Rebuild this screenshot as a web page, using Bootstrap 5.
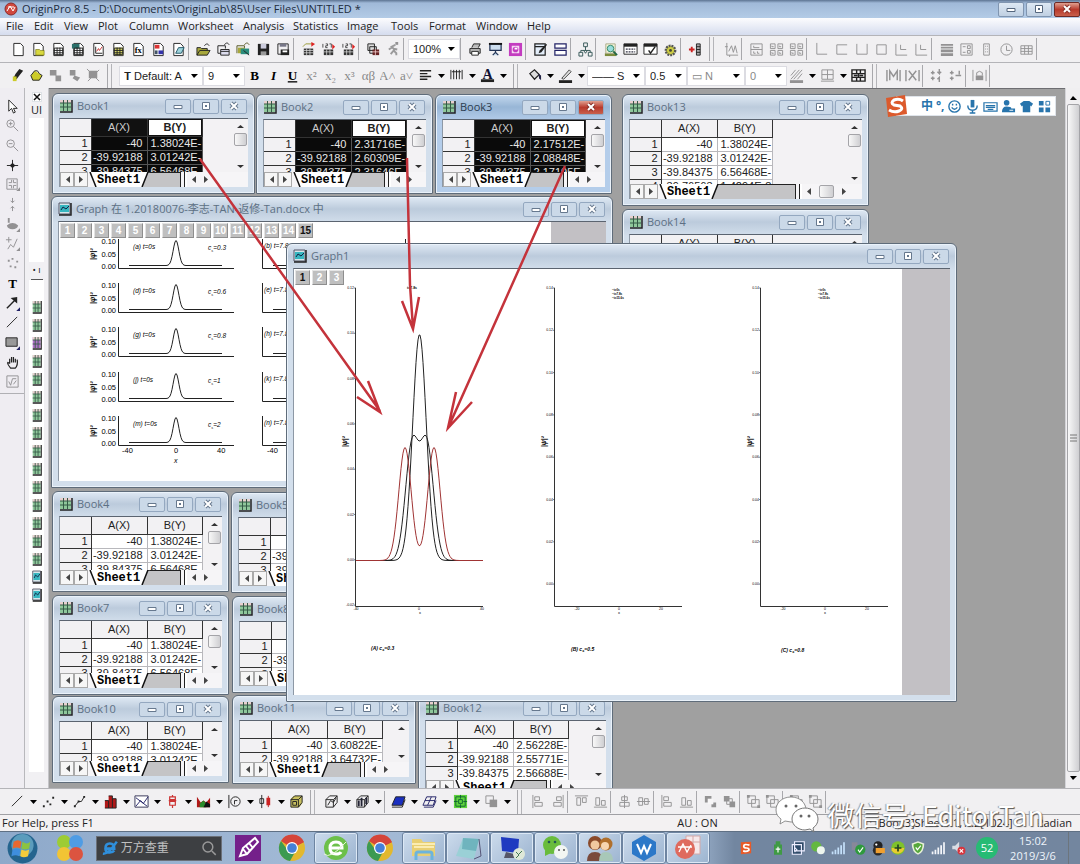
<!DOCTYPE html>
<html lang="en">
<head>
<meta charset="utf-8">
<meta name="viewport" content="width=device-width, initial-scale=1">
<title>OriginPro 8.5</title>
<link href="https://cdn.jsdelivr.net/npm/bootstrap@5.3.0/dist/css/bootstrap.min.css" rel="stylesheet">
<style>
:root{--ui:"Open Sans","Noto Sans CJK SC",sans-serif;--num:"Liberation Sans",sans-serif;}
body{font-family:var(--ui);font-size:11px;line-height:16px;color:#222;background:#efedf0;overflow:hidden}
button{font:inherit;color:inherit}
svg{display:block}
.titlebar{height:18px;background:linear-gradient(#5d7492 0,#a0b9d8 3px,#b3cbe6);color:#1d2b3c}
.menubar{height:17px;background:linear-gradient(#fcfcfe,#d5dcee);padding-left:2px}
.menubar a{color:#222;text-decoration:none;line-height:16px}
.caps{gap:2px}
.capbtn{width:26px;height:15px;border:1px solid #8095b0;border-radius:2px;background:linear-gradient(#dde8f4,#c0d0e2);padding:0;display:flex;align-items:center;justify-content:center;color:#55677e}
.capbtn.closer{background:linear-gradient(#e0a090,#b83a2c 50%,#c8604c);border-color:#6e2a26;color:#fff}
.toolrow{height:27px;border-top:1px solid #b4b4b8;background:#f1f0f2;padding-left:8px}
.toolrow.thin{height:26px}
.tl{width:20px;height:22px;padding:0;border:0;background:transparent;display:flex;align-items:center;justify-content:center;flex:none}
.thin .tl{width:19px}
.tcar{width:12px;height:22px;padding:0;border:0;background:transparent;display:flex;align-items:center;justify-content:center;flex:none}
.tsep{width:5px;height:22px;border-left:1px solid #a8a8ac;flex:none}
.tgrip{width:16px;height:24px;flex:none;background:linear-gradient(90deg,transparent 4px,#a8a8ac 4px,#a8a8ac 5px,transparent 5px,transparent 8px,#b4b4b8 8px,#b4b4b8 9px,transparent 9px)}
.off{opacity:.45}
.combo{appearance:none;border:1px solid #dcdce2;background:#fff url("data:image/svg+xml,%3Csvg xmlns='http://www.w3.org/2000/svg' width='7' height='4'%3E%3Cpath d='M0 0h7L3 4z'/%3E%3C/svg%3E") no-repeat right 4px center;height:20px;font:11px/16px var(--num);padding:0 12px 0 4px;color:#222;flex:none;border-radius:0}
.combo.dim{color:#888}
.side{width:25px;border-right:1px solid #b8b8bc;background:#efedf2}
.side .palette{height:306px;padding:9px 0 2px;border-bottom:1px solid #b0b0b4}
.side .tl{width:24px;height:18px}
.explorer{width:24px;background:#f1f0f3;border-right:1px solid #c4c4c8}
.explorer .xbtn{width:10px;height:10px}
.explorer .tree{width:15px;background:#fff}
.explorer .tree.upper{height:144px}
.explorer .split{height:18px;border-bottom:1px solid #555;width:12px;font-size:9px}
#books{padding-top:20px}
#books span{height:18px;flex:0 1 18px}
.desk{background:#a0a0a0;overflow:hidden;border-top:1px solid #6e6e72}
.vbar{width:15px;background:#f0eff1;border-left:1px solid #d4d4d8}
.thumb{border:1px solid #a4a4a8;border-radius:2px;background:linear-gradient(90deg,#f8f8f8,#cfcfd2)}
.frm{position:absolute;border:1px solid #5f6c7a;border-radius:6px 6px 1px 1px;background:linear-gradient(#dfe9f4 0,#bccbdc 12px,#d3dfec 26px);padding:0 6px 6px;box-shadow:inset 0 0 0 1px #eaf2fa}
.frm.act{background:linear-gradient(#c3d8ee 0,#98b6d6 12px,#b4cdea 26px)}
.frmhead{height:24px;color:#5d7084;flex:none;padding-right:1px}
.act .frmhead{color:#2c3d50}
.frmhead .capbtn{border-color:#94a8c0;color:#66788e;background:#cbd9e8}
.frmhead .capbtn.closer{background:linear-gradient(#e0a090,#b83a2c 50%,#c8604c);color:#fff}
.frmbody{background:#f3f2f4;border-top:1px solid #5b6470;border-left:1px solid #8d98a5}
.frmbody.canvas{background:#c2c0c4}
.sheet{width:143px;table-layout:fixed;border-collapse:collapse;font:11px/13px var(--num);margin:0}
.sheet th,.sheet td{font-weight:400;padding:0 4px 0 0;text-align:right;height:14px;overflow:hidden;white-space:nowrap;border-right:1px solid #b8b8bc;border-bottom:1px solid #b8b8bc;background:#fff}
.sheet td:last-child{padding:0 0 0 3px;text-align:left}
.sheet thead th{height:17px;text-align:center;padding:0;background:#f2f1f3}
.sheet th{background:#f2f1f3;border-color:#333;padding-right:3px}
.sheet .c0{width:31px}.sheet .c1{width:56px}
.picked td{background:#0a0a0a;color:#e8e8e8;border-color:#555}
.picked thead th:nth-child(2){background:#111;color:#ccc}
.picked thead th:nth-child(3){box-shadow:inset 0 0 0 1px #111;background:#fff;font-weight:700}
.tabs1{height:15px;font:bold 12px/14px "Liberation Mono",monospace;color:#000;flex:none;background:#f6f5f7}
.navb{width:14px;height:15px;border:1px solid #aaa;background:#f6f6f6;padding:0;display:flex;align-items:center;justify-content:center;flex:none}
.sheetname{background:#fff;border:0;padding:0;font:inherit;flex:none}
.blank{background:#c4c4c6;border-top:1px solid #222;border-right:1px solid #222;height:15px;flex:none;width:31px}
.blank.long{width:76px}
.bars2{width:3px;border-left:1px solid #222;margin-left:3px;background:#fff}
.sv{width:16px}.sv .thumb{width:13px;height:13px}
.hthumb{width:15px;height:13px}
.layers{position:absolute;left:1px;top:1px;gap:2px}
.lay{width:15px;height:15px;padding:0;border:1px solid;border-color:#e4e4e4 #8e8e8e #8e8e8e #e4e4e4;background:#bfbfbf;color:#fff;font:bold 10px/12px var(--num)}
.lay.on{color:#111}
.over{position:absolute;left:0;top:0;pointer-events:none;z-index:40}
.ime{position:absolute;right:9px;top:7px;height:20px;background:#fff;border:1px solid #dfe4ea;padding-left:20px;padding-right:3px;color:#2774ac;width:160px}
.ime svg.logo{position:absolute;left:-14px;top:-4px}
.ime span{font-size:12px;font-weight:700}
.statusbar{height:17px;border-top:1px solid #a0a0a4;background:#f3f1f2;padding:0 8px 0 2px}
.stat-au{width:192px}.stat-cell{white-space:nowrap}
.taskbar{height:33px;background:linear-gradient(90deg,#8ea9ca,#a3bad6 30%,#9fb5d0 64%,#7286a0 68%,#73869f);border-top:1px solid #5f7084;color:#eef4fb}
.tk{width:44px;height:32px;padding:0;border:0;background:transparent;display:flex;align-items:center;justify-content:center;flex:none}
.tk.run{border:1px solid #6d84a1;box-shadow:inset 0 0 0 1px #dce8f5;background:linear-gradient(135deg,#ccdbec,#9cb4d0);border-radius:3px}
.find{width:126px;height:25px;background:#3d3f42;border:1px solid #6b7078}
.find input{width:84px;min-width:0;background:transparent;border:0;color:#c8c8c8;font:12px/16px var(--ui);padding:0 0 0 2px}
.find input::placeholder{color:#c0c0c0}
.ty{width:20px;height:30px;padding:0;border:0;background:transparent;display:flex;align-items:center;justify-content:center;flex:none}
.ty:first-child{margin-right:12px}
.n52{width:22px;height:22px;border-radius:50%;background:#27bb74;color:#fff;line-height:22px}
.clk{width:54px;line-height:15px}
.peek{width:12px;height:32px}
.water{position:absolute;right:36px;bottom:30px;z-index:60;color:#fff;font:27px/36px "Noto Sans CJK SC",sans-serif;text-shadow:1px 1px 1px #555,-1px 0 1px #999;pointer-events:none;gap:8px;white-space:nowrap}
</style>
</head>
<body class="d-flex flex-column vh-100 position-relative">
<header class="titlebar d-flex align-items-center ps-1 flex-shrink-0">
  <svg width="14" height="14" viewBox="0 0 14 14" class="me-1"><circle cx="7" cy="7" r="6" fill="#d0483e" stroke="#8d2b2b"/><path d="M3 9l3-5 3 5 2-4M4 5h6" fill="none" stroke="#fff"/></svg>
  <span class="flex-grow-1 text-nowrap">OriginPro 8.5 - D:\Documents\OriginLab\85\User Files\UNTITLED *</span>
  <div class="d-flex caps" data-caps="main"></div>
</header>
<nav class="menubar d-flex flex-shrink-0" aria-label="Menu"></nav>
<div class="toolrow d-flex align-items-center flex-shrink-0" data-tools="new folder sheet xls graph matrix fx layout note | open openS openG save saves | impw imp1 impn | dup run- | $zoom | print slide puzzle | edit split | tree | find table check gear | addcol # gfx- | lay1- lay4- lay4- | axL- axC- axU- axB- axI- axI- | lines- leg- col- clock- grid- |"></div>
<div class="toolrow thin d-flex align-items-center flex-shrink-0" data-tools="brush paint c1- c2- c3- # $font $size tB tI tU tsup- tsub- tss- tab- tA- ta- left , bars , fontc , # bucket , pen , $line $lw $fill $fs hatch- , bord- , merge # mm- mx- | al1- al2- | lock- |"></div>

<main class="d-flex flex-grow-1 overflow-hidden">
  <aside class="side flex-shrink-0"><div class="palette d-flex flex-column justify-content-between" data-tools="arrow zin- zout- cross sel- dr1- dr2- dr3- dots- T arr line rect hand sqrt-"></div></aside>
  <aside class="explorer flex-shrink-0 d-flex flex-column align-items-center">
    <button class="xbtn border bg-white p-0 mt-1" aria-label="Close explorer"><svg width="8" height="8" viewBox="0 0 8 8"><path d="M1 1l6 6M7 1L1 7" stroke="#111" stroke-width="1.500"/></svg></button>
    <span>UI</span>
    <div class="tree upper flex-shrink-0"></div>
    <div class="split flex-shrink-0 text-center">• ı</div>
    <div id="books" class="tree d-flex flex-column align-items-center flex-grow-1 mb-3"></div>
  </aside>
  <section class="desk position-relative flex-grow-1" id="desk"></section>
  <div class="vbar flex-shrink-0 d-flex flex-column align-items-center py-2">
    <svg width="7" height="4"><path d="M0 4h7L3 0z"/></svg>
    <div class="thumb flex-grow-1 my-1 d-flex align-items-center"><svg width="11" height="8" viewBox="0 0 11 8"><path d="M2 1h7M2 4h7M2 7h7" stroke="#777"/></svg></div>
    <svg width="7" height="4"><path d="M0 0h7L3 4z"/></svg>
  </div>
</main>

<div class="toolrow thin d-flex align-items-center flex-shrink-0" data-tools="line , scat , ls , hist , fit , box , area , polar , candle , td # cube , cubeb , | surf , wire , cont , img- , # l1- l2- | l3- l4- | l5- l6- | l1- l4- | g1- g2- | g3- g3- | g3- g3- |"></div>
<footer class="statusbar d-flex flex-shrink-0 align-items-center">
  <span class="flex-grow-1">For Help, press F1</span>
  <span class="stat-au">AU : ON</span>
  <span class="stat-cell">: [Book3]Sheet1!1,1..2[1024]</span>
  <span class="ms-4">Radian</span>
</footer>
<footer class="taskbar d-flex align-items-center flex-shrink-0" id="task"></footer>
<div class="water d-flex align-items-center">
  <svg width="44" height="38" viewBox="0 0 44 38"><path d="M16 1C7 1 1 7 1 14c0 4 2 7 5 9l-1 5 5-3 6 1c8 0 15-5 15-12S25 1 16 1z" fill="#fff" stroke="#777" stroke-width=".8"/><path d="M30 12c-7 0-13 5-13 11s6 11 13 11l5-1 4 3-1-4c3-2 5-5 5-9 0-6-6-11-13-11z" fill="#fff" stroke="#777"/><g fill="#666"><circle cx="11" cy="10" r="1.500"/><circle cx="21" cy="10" r="1.500"/><circle cx="26" cy="20" r="1.500"/><circle cx="34" cy="20" r="1.500"/></g></svg>
  <span>微信号: EditorTan</span>
</div>
<script>
const page='<path d="M3 1.500h7l3 3v10H3z" fill="#fff" stroke="#222"/>';
const S=(d,c='#222',w=1,f='none')=>`<path d="${d}" fill="${f}" stroke="${c}" stroke-width="${w}"/>`;
const F=(d,c='#222')=>`<path d="${d}" fill="${c}"/>`;
const X=(t,a='')=>`<text x="8" y="13" text-anchor="middle" font-family="Liberation Serif" font-size="14" ${a}>${t}</text>`;
const gridp=S('M3.500 6.500h9v7h-9zM3 9h10M3 11.500h10M6.500 6v8M9.500 6v8');
const opn=F('M1 14V6h4l1 1h6v2h3l-3 5z','#a8a83c')+S('M1 14V6h4l1 1h6v2M1 14l3-5h11l-3 5zM9 4c2-3 4-2 5 0');
const flop=F('M2 2h12v12H2z')+F('M5 2h6v5H5z','#ccd')+F('M5 10h6v4H5z','#999');
const cubep=S('M2 6l4-4h8v7l-4 5H2zM2 6h8l4-4M10 6v8');
const hx=S('M2 3h12v10H2z','#777');
const I={
new:page,folder:page+F('M5 8h4l1 1h4v5H5z','#d8d840')+S('M5 8h4l1 1h4v5H5z','#660',.6),sheet:page+gridp,
xls:page+F('M1 2h8v5H1z','#2a6f6a')+gridp,graph:page+S('M5 5v7h7')+S('M6 10l2-3 1 2 3-4','#c33'),
matrix:page+F('M4 6h9v8H4z','#dada66')+gridp,fx:page+`<text x="4" y="12" font-size="9" font-weight="700" font-family="Liberation Serif">fx</text>`,
layout:page+F('M4 3h5v4H4z','#d33')+F('M8 9h5v4H8z','#33a')+F('M4 9h3v4H4z','#456'),note:page+S('M5 12l3-6h6l-3 6z','#256',1,'#9fd4dc'),
open:opn,openS:S('M2 4h8v3M2 4v8h3M9 3c2-3 4-2 5 0')+S('M5 8h9v6H5zM5 10h9','#222',1,'#dde'),openG:S('M1 12V4h8v3M9 3c2-3 4-2 5 0','#552')+F('M2 6h7v6H2z','#a8a83c')+F('M5 7h9v6H5z','#2a8c7c')+S('M8 9l6 5'),
save:flop,saves:S('M2 2h11v11H2z')+F('M5 8h9v6H5z')+F('M7 9h5v2H7z','#fff')+F('M4 2h7v3H4z','#778'),
impw:F('M3 7h10v7H3z','#333')+S('M3 9h10M3 11.500h10M6 7v7M9.500 7v7','#ddd',.8)+S('M2 5l3-3h7','#993')+F('M11 0l4 2-4 3z','#d22'),
imp1:F('M3 8h10v6H3z','#333')+S('M3 10.500h10M6 8v6M9.500 8v6','#ddd',.8)+S('M2 2v4M5 2h2v2H5v2h2M9 2h2v4','#222',.8)+F('M12 2l3 3-3 3z','#d22'),
dup:S('M2 2h7v7H2zM4 5h7v7H4z','#222',1,'#ddd')+F('M7 8h7v6H7z','#622')+S('M7 10.500h7M10 8v6','#fdd',.8),
run:S('M10 3l-4 2 3 3-4 5M6 6L3 8M8 7l4 1M8 9l3 3v2','#333',2)+F('M10 0h3v3h-3z'),
print:S('M4 6l2-4h7l-2 4M2 7h11v5H2z','#222',1,'#bbb')+S('M4 10h7v4H4z','#222',1,'#fff'),
slide:S('M2 2h12v7H2zM8 9v3M5 14l3-3 3 3','#235',1.3,'#cde')+S('M1 2h14','#111',2),
puzzle:F('M1 1h14v14H1z','#c33cc0')+F('M4 4h8v8H4z','#f6d8f4')+C0(8,8,3,'#c33cc0')+F('M7 6h3v2H7z','#fff'),
edit:S('M2 2h11v12H2zM2 5h11','#222',1.3,'#e4eefa')+F('M14 2L7 9l-1 3 3-1 6-8z'),split:S('M2 2h12v4.500H2zM2 9h12v5H2z','#226',1.3,'#fff'),
tree:S('M6 1h4v4H6zM1 11h4v4H1zM11 11h4v4h-4zM8 5v4M3 11V9h10v2M6 9l2 3 2-3','#355'),
find:F('M2 12h12v3H2z','#7b8b3c')+S('M3 2h10v10H3z','#aa8',1,'#f4f4d8')+'<circle cx="8" cy="7" r="3.500" fill="#9dd" stroke="#386"/>'+S('M11 10l4 4','#264',2),
table:S('M1 2h14v11H1z','#222',1,'#fff')+F('M1 2h14v3H1z')+S('M3 7.500h10M3 10.500h10','#334',1.3).replace('/>',' stroke-dasharray="2 1"/>'),check:S('M1 2h14v11H1z','#222',1,'#fff')+F('M1 2h14v3H1z')+S('M6 9l2 3 5-7','#222',1.5),
gear:'<circle cx="8" cy="9" r="5" fill="#cccc44" stroke="#555" stroke-width="2.500" stroke-dasharray="2 1"/>'+C0(8,9,1.5,'#443'),
addcol:S('M1 8h6M4 5v6','#c22',2)+S('M9 2h4v12H9zM9 5h4M9 8h4M9 11h4','#222',1,'#aaa'),
gfx:S('M3 1v13h12M1 5h3M6 14v2M5 10l3-6 2 7 2-7 2 8'),lay1:S('M2 2h12v12H2zM2 8h12M5 4v2h6M5 10v2h2M9 10v2h2'),lay4:S('M1.500 2h5v5h-5zM9.500 2h5v5h-5zM1.500 9h5v5h-5zM9.500 9h5v5h-5zM3 4v1h2M11 4v1h2M3 11v1h2M11 11v1h2'),
axL:S('M3 1v12h11'),axC:S('M14 3H3v10h11'),axU:S('M3 2v11h11V2'),axB:S('M3 3h10v10H3z'),axI:S('M2 2v12h12M7 3v5h6'),
lines:F('M2 2h13v2H2zM2 5h13v2H2zM2 8h13v3H2zM2 12h13v3H2z'),leg:S('M2 2h12v12H2zM4 5h3M4 11h3M9 4h3v3H9zM9 9h3v3H9z'),col:S('M5 2h6v12H5zM7 4v1M7 7v1M7 10v1M9 4v1M9 7v1M9 10v1'),clock:S('M8 2a6 6 0 100 12A6 6 0 008 2zM8 4v5h4'),grid:S('M2 4h12v9H2zM2 7h12M2 10h12M6 4v9M10 4v9'),
brush:F('M10 1l4 2-4 5-3 4H3l3-6z')+F('M3 9h4v5H3z','#cccb29'),paint:F('M2 8l4-5 8 5-3 5H4z','#cccb29')+S('M2 8l4-5 3 0 2 3 3 2-3 5H4z'),
c1:F('M2 2h7v6H2zM8 8h6v6H8z'),c2:F('M3 2h6v6H3zM8 8l6 2-3 4-5-3z'),c3:F('M3 3h9v8H3zM1 1l2 2M10 9l5 5z')+S('M1 1l13 13M14 2L2 14'),
tB:X('B','font-weight="700"'),tI:X('I','font-weight="700" font-style="italic"'),tU:X('U','font-weight="700" text-decoration="underline"'),tsup:X('x²'),tsub:X('x₂'),tss:X('x³'),tab:X('αβ'),tA:X('A˄'),ta:X('a˅'),T:X('T','font-weight="700"'),
left:S('M2 3h12M2 6h8M2 9h12M2 12h8','#222',1.5),bars:S('M2 2v10M5 2v10M8 2v10M11 2v10M14 2v10')+S('M3 4h10'),fontc:F('M1 12h14v3H1z')+'<text x="8" y="12" text-anchor="middle" font-family="Liberation Serif" font-size="15" font-weight="700" fill="#113">A</text>',
bucket:S('M3 6l5-4 5 5-5 5z','#222',1.3,'#ddd')+F('M12 6l3 2v5l-2-2z','#224'),pen:F('M1 13h14v3H1z')+S('M4 11l8-9 2 2-8 8z','#444',1,'#ddd'),
hatch:S('M2 8l5-6M2 12l9-10M5 12l9-10M9 12l5-6')+F('M1 13h14v3H1z'),bord:S('M2 2h12v10H2zM8 2v10M2 7h12')+S('M1 14h14'),merge:S('M1 2h14v12H1zM1 6h14M1 10h14M6 2v4M10 2v4M6 10v4M10 10v4M3 8h4M9 8h4M8 6v4','#222',1.5),
mm:S('M1 2v12M15 2v12M4 13V3l4 6 4-6v10','#222',1.5),mx:S('M1 2v12M15 2v12M4 3l8 10M12 3L4 13','#222',1.5),al1:S('M4 3v4M2 5h4M4 9v4M2 11h4M11 1v5l-2-2M11 6l2-2M11 15v-5l-2 2','#222',1.5),al2:S('M4 3v4M2 5h4M4 9v4M2 11h4M8 8h6M12 3v4','#222',1.5),lock:S('M1 2v12M15 2v12M5 8V5q3-3 6 0v3')+F('M4 8h8v5H4z'),
arrow:S('M4 1v12l3-3 2 5 2-1-2-4h4z','#222',1,'#fff'),zin:S('M6 2a4 4 0 100 8 4 4 0 000-8zM4 6h4M6 4v4M9 9l5 5'),zout:S('M6 2a4 4 0 100 8 4 4 0 000-8zM4 6h4M9 9l5 5'),cross:S('M8 2v12M2 8h12')+F('M8 5l3 3-3 3-3-3z'),
sel:S('M2 2h11v11H2z')+S('M4 6h3V3M9 3v3h3M4 9h3v3M9 12V9h3')+F('M12 15l4-4v4z'),dr1:S('M8 1v5M6 4l2 2 2-2M8 15v-5M6 12l2-2 2 2'),dr2:F('M2 9q6-5 12 0-1 4-6 4t-6-4zM3 1h2v5H3zM12 16l4-4v4z'),dr3:S('M1 4h6M4 1v6M3 14l3-5 3 3 4-9')+F('M12 16l4-4v4z'),dots:S('M8 2v2M3 5h2M12 6h2M5 11h2M10 12h2','#222',2),
arr:S('M2 13L11 4','#222',1.5)+F('M13 1v7L6 2z')+F('M12 16l4-4v4z','#226'),line:S('M2 13L13 2'),lineT:'' ,rect:S('M1 3h12v9H1z','#222',1,'#999')+F('M12 16l4-4v4z','#226'),hand:S('M5 9V4M7 8V2M9 8V2M11 8V4M5 9L3 8q-1 1 3 6h5q3-3 2-9','#222',1.3),sqrt:S('M2 2h12v12H2zM4 8l2 4 2-7h4M9 11l3-4'),
scat:F('M2 12h2v2H2zM6 7h2v2H6zM9 10h2v2H9zM12 3h2v2h-2z'),ls:S('M3 13l4-5h3l3-5')+F('M2 12h2v2H2zM6 7h2v2H6zM12 2h2v2h-2z'),hist:F('M2 7h4v8H2zM6 2h4v13H6zM10 5h4v10h-4z','#b01818')+S('M2 7h4v8M6 2h4v13M10 5h4v10H2'),fit:S('M1 2h14v12H1z','#335',1,'#fff')+S('M2 13l5-6 3 3 5-7M2 4l12 9','#226'),box:S('M5 3h6v3H5zM5 8h6v4H5zM8 6v2M8 1v2M8 12v3M4 7h8','#c33',1.3),area:F('M1 14V3l4 6 3-2 3 2 4-5v10z','#b01818')+F('M4 14v-4l4-3 3 3v4z','#2a8a2a')+F('M8 14l3-6 4 3v3z','#111'),polar:S('M2 1v14M9 3a5 5 0 100 10A5 5 0 009 3zM8 11V7h3'),candle:S('M4 1v14M2 5h4v5H2z','#222',1,'#fff')+S('M11 2v12','#b22')+F('M9 4h4v8H9z','#c22'),td:F('M2 5l3-3h9v8l-3 4H2z','#c8c060')+cubep+S('M4 8h4v4H4z'),
cube:cubep+S('M4 12l3-5 3 2 3-5'),cubeb:cubep+S('M4 7v6M7 4v9M12 4v7','#223',2),surf:F('M1 12l4-9h10l-3 9z','#1a2fc0')+S('M1 12l4-9h10l-3 9zM1 14h11l3-8'),wire:S('M1 12l4-9h10l-3 9zM3 7h11M6 12l4-9M2 14h10l3-7','#226'),cont:F('M1 1h14v14H1z','#5fd43c')+S('M3 3h10v10H3zM6 6h4v4H6zM1 8h4M11 8h4M8 1v4M8 11v4','#163'),img:S('M2 2h8v8H2z')+F('M6 6h8v8H6z'),
l1:S('M2 1v14M4 3h5v4H4zM4 9h8v4H4z'),l2:S('M14 1v14M7 3h5v4H7zM4 9h8v4H4z'),l3:S('M1 2h14M3 4h4v8H3zM9 4h4v5H9z'),l4:S('M1 14h14M3 4h4v8H3zM9 7h4v5H9z'),l5:S('M8 1v14M5 3h6v4H5zM3 9h10v4H3z'),l6:S('M1 8h14M3 4h4v8H3zM9 5h4v6H9z'),g1:F('M2 2h7v7H2zM9 9h5v5H9z')+F('M5 5h6v6H5z','#fff'),g2:F('M2 2h6v6H2zM8 8h6v6H8z')+S('M5 5h6v6H5z'),g3:S('M2 2h8v8H2zM6 6h8v8H6z')+F('M1 1h3v3H1zM12 12h3v3h-3z')};
function C0(x,y,r,f){return `<circle cx="${x}" cy="${y}" r="${r}" fill="${f}"/>`}
I.impn=I.imp1;
const svg=(n,s=15)=>`<svg width="${s}" height="${s}" viewBox="0 0 16 16">${I[n]||hx}</svg>`;
const combos={zoom:['100%',52],font:['𝐓 Default: A',84],size:['9',42],line:['—— S',58],lw:['0.5',42],fill:['▭ N',58,1],fs:['0',42,1]};
document.querySelectorAll('[data-tools]').forEach(bar=>{
  bar.innerHTML=bar.dataset.tools.split(' ').map(t=>{
    if(t==='|')return '<span class="tsep"></span>';
    if(t==='#')return '<span class="tgrip"></span>';
    if(t===',')return '<button class="tcar" aria-label="More"><svg width="7" height="4"><path d="M0 0h7L3.500 4z"/></svg></button>';
    if(t[0]==='$'){const c=combos[t.slice(1)];return `<select class="combo ${c[2]?'dim':''}" aria-label="${t.slice(1)}" style="width:${c[1]}px"><option>${c[0]}</option></select>`}
    const off=t.endsWith('-'),n=off?t.slice(0,-1):t;
    return `<button class="tl ${off?'off':''}" aria-label="${n}">${svg(n)}</button>`}).join('');
});
const cap=(k)=>['<svg width="12" height="8"><path d="M2 3.500h8v3H2z" fill="#fff" stroke="currentColor"/></svg>','<svg width="12" height="10"><path d="M2.500 1.500h7v7h-7z" fill="#fff" stroke="currentColor"/><path d="M5 4h2v2H5z" fill="currentColor"/></svg>',`<svg width="12" height="10"><path d="M3 2l6 6M9 2L3 8" stroke="${k?'#8a3028':'currentColor'}" stroke-width="4"/><path d="M3 2l6 6M9 2L3 8" stroke="#fff" stroke-width="2"/></svg>`].map((s,i)=>`<button class="capbtn ${k&&i==2?'closer':''}" aria-label="${['Minimize','Restore','Close'][i]}">${s}</button>`).join('');
document.querySelector('[data-caps]').innerHTML=cap(1);
const menus={File:28,Edit:30,View:34,Plot:31,Column:49,Worksheet:65,Analysis:50,Statistics:54,Image:44,Tools:38,Format:47,Window:51,Help:40};
document.querySelector('.menubar').innerHTML=Object.entries(menus).map(([m,w])=>`<a href="#" class="text-nowrap ps-1" style="width:${w}px">${m}</a>`).join('');
const bookIc=(c='#8fc79b')=>`<svg width="14" height="14" viewBox="0 0 14 14"><path d="M1 1h11v11H1z" fill="${c}"/><path d="M1 1h11v3H1z" fill="#e8d0d0"/><path d="M13 1v12H1" fill="none" stroke="#222" stroke-width="1.500"/><path d="M1 4h11M1 8h11M4.500 1v11M8.500 1v11" stroke="#345a46"/></svg>`;
const graphIc='<svg width="14" height="14" viewBox="0 0 14 14"><path d="M1 1h11v11H1z" fill="#d6e6ea" stroke="#556"/><path d="M2 3h9v7H2z" fill="#36b6c0"/><path d="M13 1v12H1" fill="none" stroke="#222" stroke-width="1.500"/><path d="M3 8l2-3 3 2 3-3" fill="none" stroke="#124"/></svg>';
document.getElementById('books').innerHTML=Array.from({length:17},(_,i)=>`<span>${(i>14?graphIc:bookIc(i==2?'#b070c8':undefined)).replace('width="14"','width="10"').replace('viewBox','preserveAspectRatio="none" viewBox')}</span>`).join('');
const tri=l=>`<svg width="5" height="7"><path d="${l?'M5 0v7L1 3.500z':'M0 0v7l4-3.500z'}" fill="#444"/></svg>`;
const A=['-40','-39.92188','-39.84375','-39.76563'],B1=['1.38024E-','3.01242E-','6.56468E-','1.4294E-8'];
const books=[
['Book1',52,93,203,101,B1,{sel:1}],['Book2',256,94,177,100,['2.31716E-','2.60309E-','2.31646E-'],{sel:1}],['Book3',435,94,177,100,['2.17512E-','2.08848E-','2.17195E-'],{sel:1,act:1}],
['Book13',622,94,247,112,B1,{wide:1}],['Book14',622,209,247,112,B1,{wide:1}],
['Book4',52,491,177,101,B1,{}],['Book5',231,492,184,101,B1,{}],['Book7',52,595,177,100,B1,{}],['Book8',232,596,184,97,B1,{}],
['Book10',52,696,177,87,B1,{small:1}],['Book11',232,695,184,89,['3.60822E-','3.64732E-','3.68E-'],{small:1}],['Book12',418,695,195,107,['2.56228E-','2.55771E-','2.56688E-'],{}]];
const place=(x,y,w,h)=>`left:${x-49}px;top:${y-89}px;width:${w}px;height:${h}px`;
const head=(ic,t,k)=>`<div class="frmhead d-flex align-items-center gap-1">${ic}<span class="flex-grow-1 text-nowrap">${t}</span><div class="d-flex caps">${cap(k)}</div></div>`;
let out=books.map(([n,x,y,w,h,b,o])=>`<article class="frm d-flex flex-column ${o.act?'act':''}" style="${place(x,y,w,h)}">${head(bookIc(),n,o.act)}
<div class="frmbody flex-grow-1 d-flex flex-column overflow-hidden"><div class="d-flex flex-grow-1 overflow-hidden">
<div class="flex-grow-1 overflow-hidden"><table class="sheet ${o.sel?'picked':''}"><thead><tr><th class="c0"></th><th class="c1">A(X)</th><th>B(Y)</th></tr></thead><tbody>${b.map((v,i)=>`<tr><th>${i+1}</th><td>${A[i]}</td><td>${v}</td></tr>`).join('')}</tbody></table></div>
<div class="sv d-flex flex-column align-items-center"><svg width="7" height="14"><path d="M0 9h7L3.500 6z" fill="#333"/></svg>${o.small?'':'<div class="thumb flex-shrink-0"></div>'}<span class="flex-grow-1"></span><svg width="7" height="7"><path d="M0 0h7L3.500 3z" fill="#333"/></svg></div></div>
<div class="tabs1 d-flex"><button class="navb" aria-label="Previous sheet">${tri(1)}</button><button class="navb" aria-label="Next sheet">${tri(0)}</button>
<svg width="9" height="15" class="flex-shrink-0"><path d="M2 0h7v15z" fill="#fff"/><path d="M2 0l6 15" stroke="#111" stroke-width="1.500"/></svg><button class="sheetname">Sheet1</button><svg width="10" height="15" class="flex-shrink-0"><path d="M0 0h8L2 15H0z" fill="#fff"/><path d="M8 0h2v15H2z" fill="#c4c4c6"/><path d="M2 15L8 0h2" stroke="#111" fill="none" stroke-width="1.500"/></svg>
<span class="blank ${o.wide?'long':''}"></span><span class="bars2 flex-shrink-0"></span><span class="d-flex align-items-center ps-1 gap-2">${tri(1)}${o.wide?'<span class="thumb hthumb"></span>':''}${tri(0)}</span></div></div></article>`).join('');
const tx=(x,y,t,s,a='')=>`<text x="${x}" y="${y}" font-size="${s}" ${a}>${t}</text>`;
const curve=(x0,x1,c,base,f)=>{let p='';for(let x=x0;x<=x1;x++)p+=(p?'L':'M')+x+' '+(base-f(x-c)).toFixed(1);return p};
const g=(x,s)=>Math.exp(-x*x/2/s/s);
// Panels of the embedded document graph
const rows=[['a',269,'0.3','b'],['d',313,'0.6','e'],['g',357,'0.8','h'],['j',402,'1','k'],['m',446,'2','n']];
let d1='';
rows.forEach(([l,y,c,r])=>{
 d1+=S(`M118.500 ${y-30}V${y-.5}H234M262.500 ${y-30}V${y-.5}H300M273 ${y-3.5}H300`,'#222')+S(curve(129,222,176,y-3.5,x=>25*g(x,2.8)),'#222');
 ['0.10','0.05','0.00'].forEach((t,k)=>d1+=tx(116,y-25+k*12.5,t,7.5,'text-anchor="end"'));
 d1+=tx(133,y-20,`(${l}) t=0s`,6.5,'font-style="italic"')+tx(208,y-19,`c<tspan font-size="4" dy="2">s</tspan><tspan dy="-2">=${c}</tspan>`,6.5,'font-style="italic"')+tx(264,y-21,`(${r}) t=7.8s`,6.5,'font-style="italic"')+`<text transform="translate(95 ${y-9}) rotate(-90)" font-size="7" font-weight="700" font-style="italic">|ψ|²</text>`});
d1+=tx(122,453,'-40',7.5)+tx(174,453,'0',7.5)+tx(217,453,'40',7.5)+tx(267,453,'-40',7.5)+tx(174,463,'x',7,'font-style="italic"')+S('M405.500 239v8');
// Three panels of Graph1
let d2='';
[[356,'A','0.3',383,8,45.3],[555,'B','0.5',583,8,42.3],[761,'C','0.8',793,8,42.3]].forEach(([x,l,c,cx,n,st],p)=>{
 d2+=S(`M${x-.5} 288V606.500H${x+127}`,'#333');
 for(let k=0;k<n;k++)d2+=tx(x-2,289+k*st,((p?14:12)/100-k*.02).toFixed(2),3.5,'text-anchor="end"')+S(`M${x-2} ${288+k*st}h2`,'#333',.6);
 (p?['-20','0','20']:['-40','0','40']).forEach((t,k)=>d2+=tx(p?x+22+k*42:x+k*63,610,t,3.5,'text-anchor="middle"'));
 d2+=tx(x+63,614,'x',4)+`<text transform="translate(${x-9} 447) rotate(-90)" font-size="6.500" font-weight="700" font-style="italic">|ψ|²</text>`;
 d2+=tx(cx-12,650+p,`(${l}) c<tspan font-size="4" dy="1">s</tspan><tspan dy="-1">=${c}</tspan>`,5,'font-style="italic" font-weight="700"');
 if(p)['t=0s','t=7.8s','t=15.6s'].forEach((t,k)=>d2+=tx(x+57,291+k*4,'–'+t,3,'font-weight="700"'));else d2+=tx(407,289,'t=7.8s',3.5,'font-weight="700"')});
d2+=S(curve(356,483,419.5,560.5,x=>226*g(x,6.8)),'#222')+S(curve(356,483,419.5,560.5,x=>114*(g(x-7.5,6.6)+g(x+7.5,6.6))),'#222')+S(curve(356,483,419.5,560.5,x=>113*(g(x-14.5,6.2)+g(x+14.5,6.2))),'#a03434');
const gw=(t,x,y,w,h,n,on,page,body)=>`<article class="frm d-flex flex-column" style="${place(x,y,w,h)}">${head(graphIc,t)}<div class="frmbody canvas flex-grow-1 position-relative overflow-hidden d-flex"><svg class="flex-shrink-0 bg-white" width="${page}" height="${h-32}" viewBox="${x+8} ${y+26} ${page} ${h-32}" font-family="Liberation Sans">${body}</svg><div class="layers d-flex">${Array.from({length:n},(_,i)=>`<button class="lay ${i+1==on?'on':''}">${i+1}</button>`).join('')}</div></div></article>`;
out+=gw('Graph 在 1.20180076-李志-TAN-返修-Tan.docx 中',51,196,562,292,15,15,492,d1)+gw('Graph1',286,243,671,459,3,1,608,d2);
out+=`<svg class="over" width="1016" height="698" viewBox="49 89 1016 698">${S('M200 159L380 411M357 397l23 15-12-31M407 158l3 127 3 43M402 301l11 28 6-32M565 166L503 305 448 428M456 392l-8 36 24-26','#c4333b',2.5)}</svg>`;
const m=(d)=>`<svg width="15" height="15" viewBox="0 0 16 16">${d}</svg>`,bl='#2774ac';
out+=`<div class="ime d-flex align-items-center justify-content-between"><svg class="logo" width="26" height="26" viewBox="0 0 26 26"><path d="M3 5l19-3 2 19-19 3z" fill="#dc5a2c"/><path d="M20 8q-4-3-9-1-4 3 0 5l6 1q4 3-1 5-5 2-10-1" fill="none" stroke="#fff" stroke-width="3"/></svg><span class="ms-1">中</span><span>°,</span>${m(S('M8 2a6 6 0 100 12A6 6 0 008 2zM5 9q3 4 6 0M6 5v2M10 5v2',bl,1.5))}${m(F('M6 1h4v8H6z',bl)+S('M3 7q0 5 5 5t5-5M8 12v3M5 15h6',bl,1.5))}${m(S('M1 4h14v9H1zM3 7h10M3 9h10M5 11h6',bl,1.3))}${m(C0(6,4,3,bl)+F('M1 14q0-6 5-6t5 2h4v4z',bl)+S('M9 12h4','#fff'))}${m(F('M5 2h6l4 3-2 3-1-1v7H4V7L3 8 1 5z',bl))}${m(F('M2 2h5v5H2zM9 9h5v5H9zM2 9h5v5H2z',bl)+S('M9.500 2.500h4v4h-4z',bl))}</div>`;
document.getElementById('desk').innerHTML=out;
// Taskbar
const t=(d,s=28)=>`<svg width="${s}" height="${s}" viewBox="0 0 28 28">${d}</svg>`;
const C=C0;
const chrome=C(14,14,13,'#e2b82e')+F('M14 14L3 7a13 13 0 0123 1z','#d5453a')+F('M14 14L26 8H14z','#d5453a')+F('M3 7a13 13 0 009 20l5-9-6 0z','#3c9a52')+C(14,14,6,'#fff')+C(14,14,4.8,'#4480d8');
const apps=[
['pen',F('M1 1h26v26H1z','#74208a')+S('M6 22l3-8 12-10 3 4-11 12zM9 15l4 5M12 12l4 5M15 9l4 5','#fff',2),0],['Chrome',chrome,0],
['browser',C(14,14,12,'#6cc04a')+S('M8 14h12q0-6-6-6t-6 6q0 6 6 6 4 0 5-2','#fff',3)+S('M2 20Q8 26 24 8','#e8f6d8'),1],['Chrome',chrome,0],
['Explorer',F('M2 5h9l2 3h12v14H2z','#e8cf72')+S('M2 10h23M4 13h20','#fff6c8',1.5)+S('M6 26v-6q0-2 2-2h12q2 0 2 2v6','#6cb4dc',3),1],
['notes',F('M9 4l16 1-5 20-18-3z','#9ad0d6')+F('M9 4l16 1-3 12-14-2z','#6fb4be')+S('M25 5l2 17-7 3','#557'),1],
['remote',F('M3 3l18 2-1 14-16-2z','#1f3ac0')+F('M8 18l8 2v4H6z','#556')+C(21,20,6,'#dfe8d8')+S('M18 18l3 3-3 3M24 17l-3 3','#475'),1],
['WeChat',C(10,11,9,'#69bc3c')+F('M3 16v6l6-3z','#69bc3c')+C(19,18,7,'#f2f6f2')+C(7,8,1.3,'#255')+C(13,8,1.3,'#255')+C(17,16,1,'#555')+C(22,16,1,'#555'),1],
['people',C(9,9,7,'#8a4a2a')+C(9,11,4.5,'#f0c8a0')+C(20,10,6.5,'#b0702c')+C(19,12,4,'#f6d6b0')+F('M1 27q0-9 8-9t7 9z','#7a4a3c')+F('M13 27q0-9 7-9t7 9z','#a8c8b8'),1],
['WPS',F('M14 1l12 7v12l-12 7-12-7V8z','#2c78c8')+S('M7 10l4 9 3-7 3 7 4-9','#fff',2),1],
['Origin',S('M12 2h14v18H12zM12 8h14M19 2v18','#d4a8a8',1,'#f6e8ea')+C(11,15,10,'#df6a5e')+S('M5 18l4-8 4 8 4-7M4 13h14','#fff',1.3),1]];
const tray=[F('M5 4l18-1v20l-18 2z','#e85a28')+S('M20 9q-10-3-10 2 0 3 5 3t4 4q-4 3-10 1','#fff',3),F('M7 8h14v18H7zM10 2h8v6h-8z','#3f9a44')+S('M14 12v10M10 16h8','#fff',2),S('M8 3h17v16H8zM4 8h16v17H4zM8 13l4 4-4 4','#eef',2,'#2e4a68'),C(11,11,9,'#63b840')+C(19,18,7,'#eef6ee'),F('M3 20h3v5H3zM8 17h3v8H8zM13 13h3v12h-3zM18 9h3v16h-3zM23 4h3v21h-3z','#c4e0fa'),F('M3 4h10v14H3z','#889')+C(18,17,9,'#2e9a3c')+S('M14 17l3 4 6-8','#fff',2),C(14,10,8,'#222')+C(14,18,9,'#2a2a2a')+F('M10 14h16v9H10z','#f0a030')+C(11,8,2,'#fff'),C(14,14,12,'#7fc22a')+F('M3 14h22a12 12 0 01-22 4z','#e8cc30')+S('M14 8v12M8 14h12','#242',3),F('M14 2l11 4q0 15-11 20Q3 21 3 6z','#e8f0d8')+F('M14 5l8 3q0 11-8 15-8-4-8-15z','#57a83c')+S('M10 13l3 4 6-7','#fff',2),F('M3 20h3v5H3zM8 17h3v8H8zM13 13h3v12h-3zM18 9h3v16h-3zM23 4h3v21h-3z','#f4f6fa'),F('M4 10h5l7-7v20l-7-7H4z','#d8dce4')+C(20,19,7,'#d8343c')+S('M17 16l6 6M23 16l-6 6','#fff',2)];
document.getElementById('task').innerHTML=
`<button class="tk" aria-label="Start">${t(C(14,14,13.5,'#24648e')+C(14,11,10,'#5b9cbc')+F('M6 8q4-3 7 0l-1 6q-3-2-7 0z','#e86830')+F('M14 8q4 3 7 0l-1 6q-4 2-7 0z','#8cc440')+F('M5 15q4-2 7 0l-1 6q-3-2-7 0z','#3f8ede')+F('M13 15q4 2 7 0l-1 6q-4 2-7 0z','#f4cc3c'),31)}</button>
<button class="tk ms-1" aria-label="Desktop tools">${t(C(8,8,7,'#9dcc34')+C(20,8,7,'#4f9ce4')+C(8,20,7,'#f2c434')+C(20,20,7,'#dc5440'))}</button>
<label class="find d-flex align-items-center px-1 ms-1 me-1">${t(S('M7 15h14q0-8-7-8t-7 8q0 6 7 6 5 0 7-3M3 23Q12 24 25 4','#2f8fdc',4),18)}<input placeholder="万方查重" aria-label="Search"><svg width="16" height="16" viewBox="0 0 16 16"><circle cx="7" cy="7" r="5" fill="none" stroke="#999" stroke-width="1.500"/><path d="M11 11l4 4" stroke="#999" stroke-width="1.500"/></svg></label>`
+apps.map(([n,d,r])=>`<button class="tk ${r?'run':''}" aria-label="${n}">${t(d)}</button>`).join('')
+`<div class="d-flex ms-auto align-items-center">${tray.map(d=>`<button class="ty" aria-label="Tray item">${t(d,16)}</button>`).join('')}<span class="n52 text-center ms-2">52</span><time class="clk text-center mx-2">15:02<br>2019/3/6</time><span class="peek border-start border-secondary"></span></div>`;
</script>
<script src="https://cdn.jsdelivr.net/npm/bootstrap@5.3.0/dist/js/bootstrap.bundle.min.js"></script>
</body>
</html>
